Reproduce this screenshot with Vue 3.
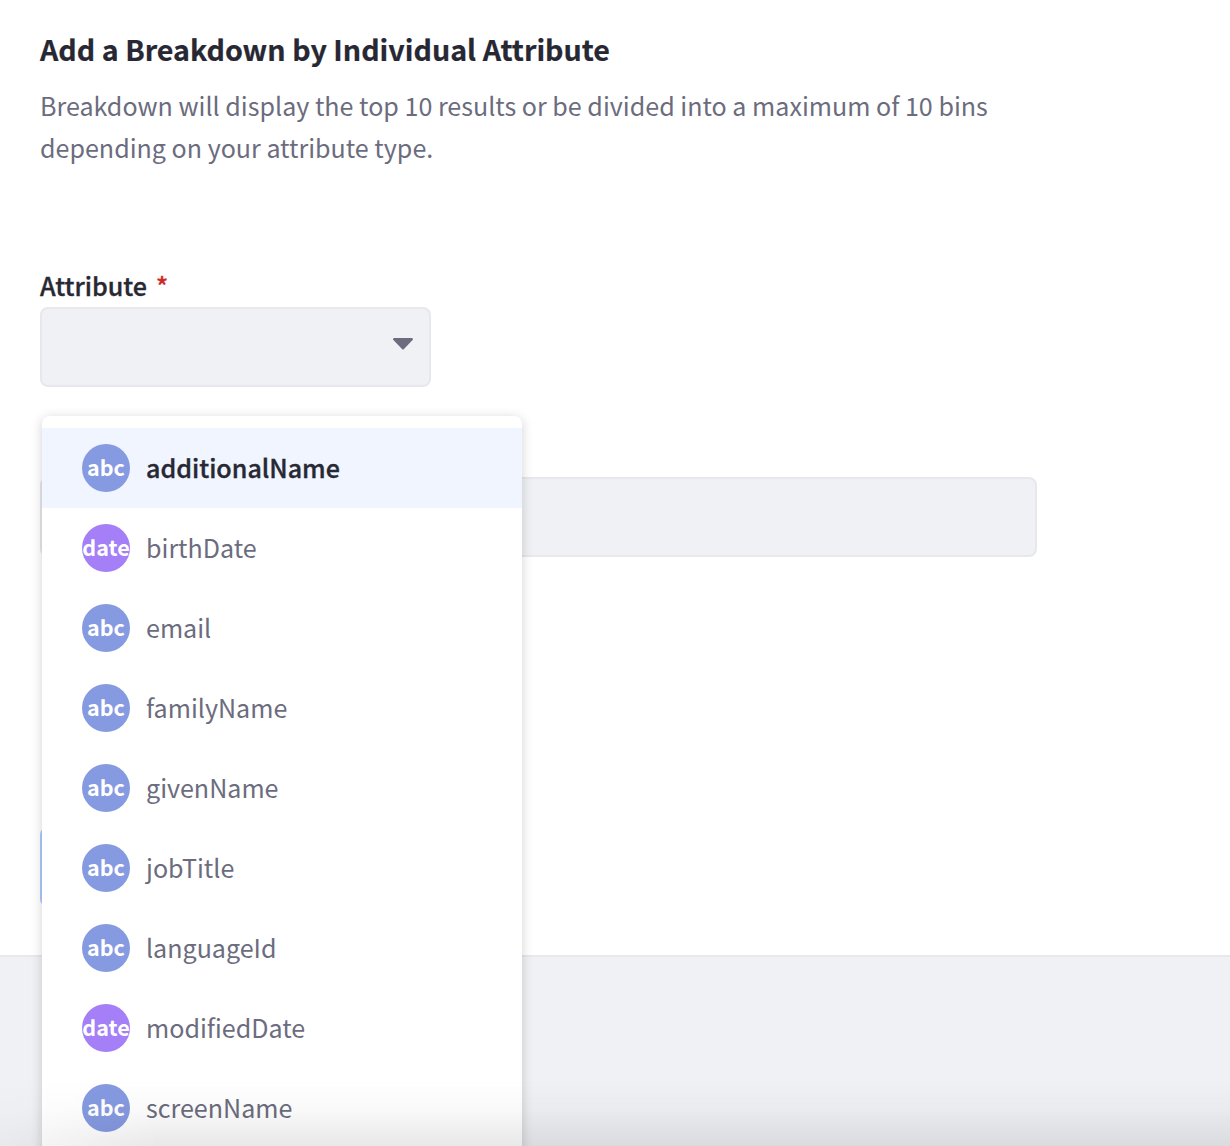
<script setup>
const options = [
  { name: 'additionalName', type: 'abc', active: true },
  { name: 'birthDate', type: 'date' },
  { name: 'email', type: 'abc' },
  { name: 'familyName', type: 'abc' },
  { name: 'givenName', type: 'abc' },
  { name: 'jobTitle', type: 'abc' },
  { name: 'languageId', type: 'abc' },
  { name: 'modifiedDate', type: 'date' },
  { name: 'screenName', type: 'abc' },
]
</script>

<template>
  <div class="page">
    <section class="card">
      <h2 class="title"><span>Add a Breakdown by Individual Attribute</span></h2>
      <p class="description">
        <span>Breakdown will display the top 10 results or be divided into a maximum of 10 bins</span><br />
        <span>depending on your attribute type.</span>
      </p>

      <div class="label"><span>Attribute</span><span class="required">*</span></div>
      <div class="select-wrap">
        <button class="select" type="button" aria-label="Attribute">
          <svg class="caret" width="20" height="12" viewBox="0 0 20 12">
            <path d="M1 0H19Q20.6 .6 19.6 2L11 11Q10 12.2 9 11L.4 2Q-.6 .6 1 0Z" fill="#6b6c7e" />
          </svg>
        </button>
        <ul class="menu">
          <li v-for="option in options" :key="option.name" class="option" :class="{ active: option.active }">
            <span class="badge" :class="option.type">{{ option.type }}</span>
            <span class="name">{{ option.name }}</span>
          </li>
        </ul>
      </div>

      <div class="field"></div>
      <div class="submit"></div>
    </section>
    <div class="window-shade"></div>
  </div>
</template>

<style>
body {
  overflow: hidden;
}
</style>

<style scoped>
.page {
  position: relative;
  height: 1146px;
  overflow: hidden;
  background: #f0f1f5;
  color: #272833;
  font-family: "Noto Sans CJK SC", "Noto Sans", sans-serif;
}
.card {
  box-sizing: border-box;
  height: 957px;
  padding: 25px 40px 0;
  background: #fff;
  border-bottom: 2px solid #e7e7ed;
}
.title {
  margin: 0;
  font-size: 28.65px;
  font-weight: 700;
  line-height: 48px;
  white-space: nowrap;
  -webkit-text-stroke: 0.2px;
}
.description {
  margin: 11px 0 0;
  color: #6b6c7e;
  font-size: 25.07px;
  line-height: 42px;
  white-space: nowrap;
}
.label {
  display: flex;
  gap: 9px;
  height: 43px;
  margin-top: 96px;
  font-size: 25.1px;
  font-weight: 500;
  line-height: 42px;
  -webkit-text-stroke: 0.35px;
}
.required {
  color: #cb2a25;
}
.select-wrap {
  position: relative;
  width: 391px;
}
.select {
  display: flex;
  justify-content: flex-end;
  box-sizing: border-box;
  width: 391px;
  height: 80px;
  padding: 29px 16px 0;
  background: #f0f1f5;
  border: 2px solid #e7e7ed;
  border-radius: 8px;
}
.caret {
  display: block;
}
.menu {
  position: absolute;
  z-index: 2;
  top: 109px;
  left: 2px;
  width: 480px;
  margin: 0;
  padding: 12px 0;
  list-style: none;
  background: #fff;
  border-radius: 8px;
  box-shadow: 0 2px 12px rgba(0, 0, 0, 0.18);
}
.option {
  display: flex;
  align-items: center;
  gap: 16px;
  height: 80px;
  padding-left: 40px;
  color: #6b6c7e;
  font-size: 25.07px;
  line-height: 42px;
}
.name {
  padding-bottom: 2px;
}
.option.active {
  background: #f0f5ff;
  color: #272833;
  font-weight: 500;
}
.active .name {
  -webkit-text-stroke: 0.35px;
}
.badge {
  display: flex;
  align-items: center;
  justify-content: center;
  width: 48px;
  height: 48px;
  overflow: hidden;
  border-radius: 50%;
  color: #fff;
  font-size: 21.5px;
  font-weight: 700;
  line-height: 46px;
  box-sizing: border-box;
  padding-bottom: 2px;
}
.abc {
  background: #869ae1;
}
.date {
  background: #a47ff7;
}
.field {
  box-sizing: border-box;
  width: 997px;
  height: 80px;
  margin-top: 90px;
  background: #f0f1f5;
  border: 2px solid #e7e7ed;
  border-radius: 8px;
}
.submit {
  width: 120px;
  height: 80px;
  margin-top: 270px;
  background: #adcaff;
  border-radius: 8px;
}
.window-shade {
  position: absolute;
  z-index: 3;
  inset: auto 0 0;
  height: 66px;
  background: linear-gradient(to bottom, transparent, rgba(0, 0, 0, 0.025) 45%, rgba(0, 0, 0, 0.09));
  mask-image: linear-gradient(to right, rgba(0, 0, 0, 0.3), #000 160px);
}
</style>
